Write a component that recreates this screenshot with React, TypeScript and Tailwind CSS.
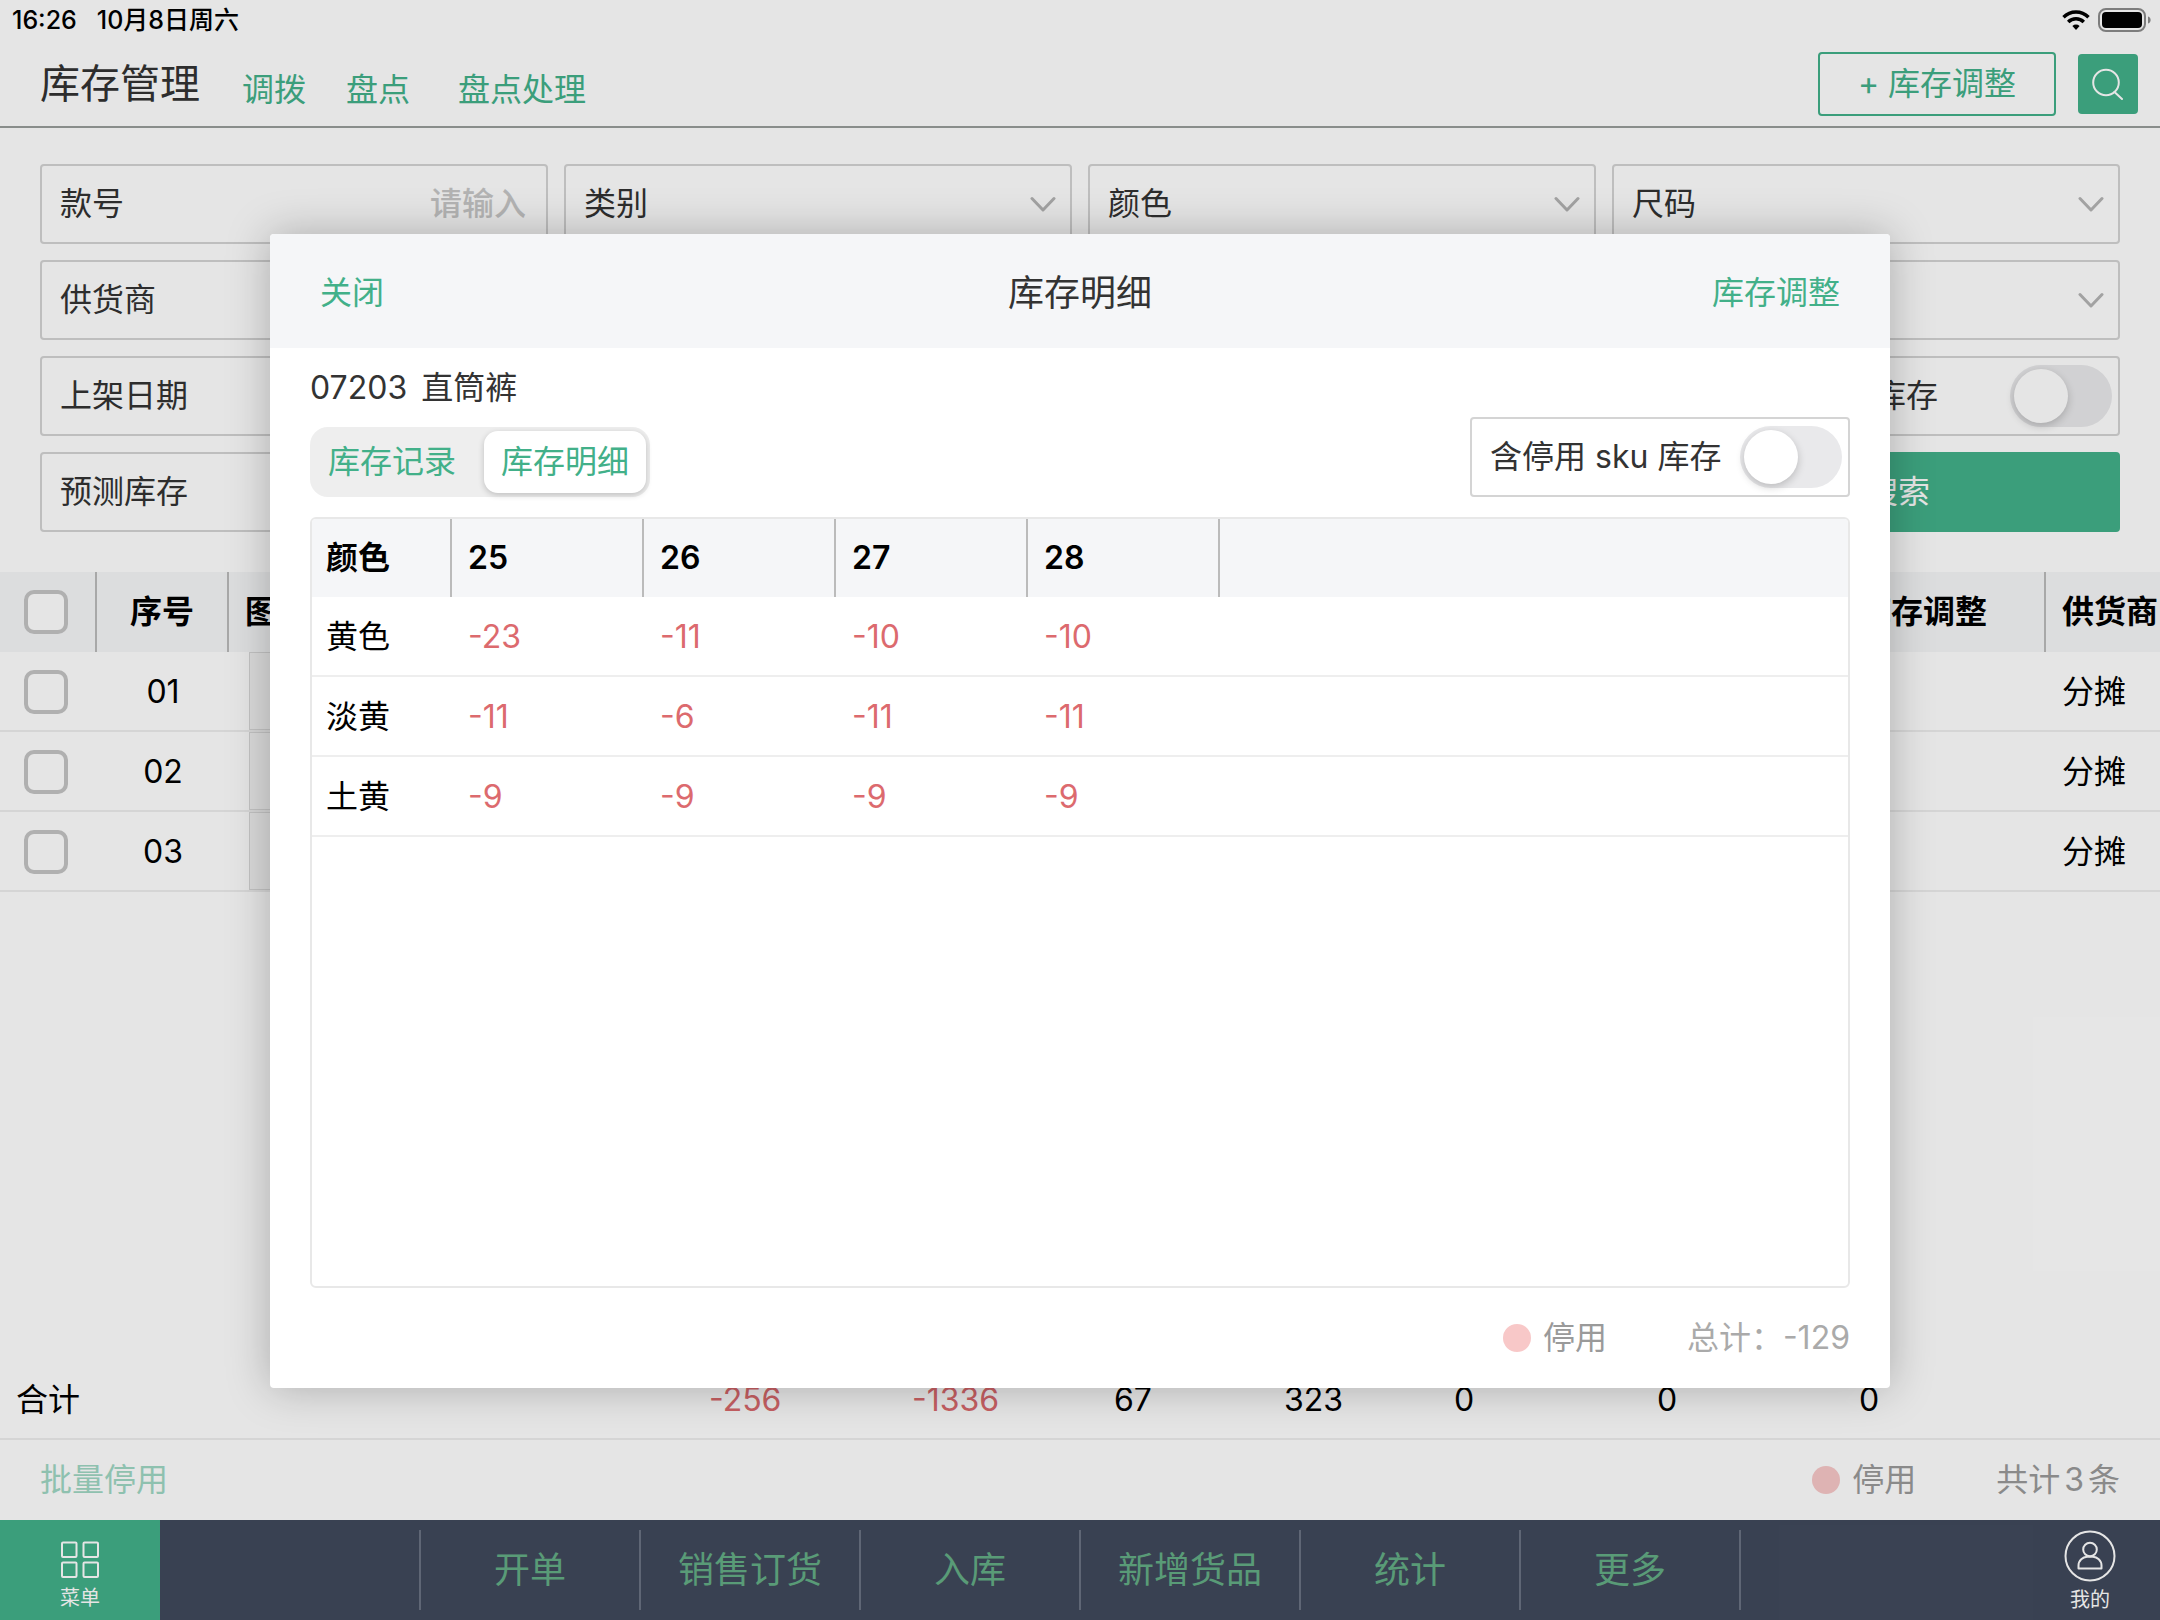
import React from 'react';
import { clsx } from 'clsx';

const sizes = ['25', '26', '27', '28'];

const stock = [
  { color: '黄色', values: [-23, -11, -10, -10] },
  { color: '淡黄', values: [-11, -6, -11, -11] },
  { color: '土黄', values: [-9, -9, -9, -9] },
];

const totals = [-256, -1336, 67, 323, 0, 0, 0];

const navItems = ['开单', '销售订货', '入库', '新增货品', '统计', '更多'];

const fieldBox = 'flex h-20 items-center rounded border-2 border-[#d4d4d4] bg-white pl-[18px] text-[#333333]';
const headCell = 'border-r-2 border-[#bbbbbb] px-4 text-left font-semibold whitespace-nowrap';
const bodyCell = 'border-b-2 border-[#eeeeee] pt-[2px]';

function StatusBar() {
  return (
    <div className="flex h-10 items-center justify-between pl-3 pr-2 text-[25px] font-medium text-black">
      <div className="flex gap-5">
        <span>16:26</span>
        <span>10月8日周六</span>
      </div>
      <div className="flex items-center gap-2">
        <svg className="h-5 w-7" viewBox="0 0 28 20" fill="none" stroke="currentColor" strokeWidth="3.4">
          <path d="M1.5 7.2a17.6 17.6 0 0 1 25 0" />
          <path d="M6.2 12a11 11 0 0 1 15.6 0" />
          <path d="M14 20l-3.6-4a5.2 5.2 0 0 1 7.2 0z" fill="currentColor" stroke="none" />
        </svg>
        <svg className="h-6 w-[54px]" viewBox="0 0 54 24" fill="none">
          <rect x="1" y="1" width="46" height="22" rx="7" stroke="#8c8c8c" strokeWidth="2" />
          <rect x="4" y="4" width="40" height="16" rx="4" fill="#000" />
          <path d="M50 8.5c2 .6 2.6 2 2.6 3.5s-.6 2.9-2.6 3.5z" fill="#8c8c8c" />
        </svg>
      </div>
    </div>
  );
}

function Header() {
  return (
    <header className="flex h-[88px] items-center justify-between border-b-2 border-[#999e9b] pl-10 pr-[22px] pt-[2px]">
      <div className="flex items-end">
        <h1 className="text-[40px] leading-[48px] text-[#333333]">库存管理</h1>
        <nav className="flex gap-10 pl-[42px] leading-9 text-[#42b089]">
          <a href="#transfer">调拨</a>
          <a href="#count" className="pr-2">盘点</a>
          <a href="#count-process">盘点处理</a>
        </nav>
      </div>
      <div className="flex items-center gap-[22px]">
        <button className="h-16 w-[238px] rounded border-2 border-[#42b089] text-[#42b089]">+ 库存调整</button>
        <button aria-label="搜索" className="flex size-[60px] items-center justify-center rounded bg-[#42b089] text-white">
          <svg className="size-8" viewBox="0 0 32 32" fill="none" stroke="currentColor" strokeWidth="2" strokeLinecap="round">
            <circle cx="14" cy="14.5" r="12.8" />
            <path d="M22.5 24l7.5 7" />
          </svg>
        </button>
      </div>
    </header>
  );
}

function Chevron() {
  return (
    <svg className="mr-[14px] h-4 w-[26px] shrink-0" viewBox="0 0 26 16" fill="none" stroke="#b5b5b5" strokeWidth="3" strokeLinecap="round" strokeLinejoin="round">
      <path d="M2 2.5l11 11.5L24 2.5" />
    </svg>
  );
}

function SelectField({ label, className }: { label?: string; className?: string }) {
  return (
    <label className={clsx(fieldBox, className)}>
      {label && <span className="shrink-0">{label}</span>}
      <select aria-label={label ?? '筛选'} className="h-full min-w-0 flex-1 appearance-none bg-transparent outline-none">
        <option value=""></option>
      </select>
      <Chevron />
    </label>
  );
}

function Switch() {
  return (
    <input
      type="checkbox"
      role="switch"
      className="h-[62px] w-[102px] shrink-0 appearance-none rounded-full bg-[#e9e9eb] p-1 before:block before:size-[54px] before:rounded-full before:bg-white before:shadow-[0_3px_8px_rgba(0,0,0,0.2)] before:content-[''] checked:bg-[#42b089] checked:before:ml-10"
    />
  );
}

function Filters() {
  return (
    <form className="grid grid-cols-4 gap-4 px-10 pb-10 pt-9">
      <label className={fieldBox}>
        <span className="shrink-0">款号</span>
        <input type="text" placeholder="请输入" className="min-w-0 flex-1 bg-transparent pr-5 text-right outline-none placeholder:font-medium placeholder:text-[#c8c8c8]" />
      </label>
      <SelectField label="类别" />
      <SelectField label="颜色" />
      <SelectField label="尺码" />
      <SelectField label="供货商" />
      <SelectField className="col-start-4" />
      <SelectField label="上架日期" />
      <label className={clsx(fieldBox, 'col-start-4 justify-between pr-[6px]')}>
        <span className="w-[306px] text-right">含停用 sku 库存</span>
        <Switch />
      </label>
      <SelectField label="预测库存" />
      <button type="button" className="col-start-4 h-20 rounded bg-[#42b089] pl-16 text-white">搜索</button>
    </form>
  );
}

function Columns() {
  return (
    <colgroup>
      <col className="w-[97px]" />
      <col className="w-[132px]" />
      <col className="w-[464px]" />
      <col className="w-[203px]" />
      <col className="w-[202px]" />
      <col className="w-[170px]" />
      <col className="w-[170px]" />
      <col className="w-[203px]" />
      <col className="w-[202px]" />
      <col className="w-[203px]" />
      <col className="w-[203px]" />
    </colgroup>
  );
}

function CheckBox({ label }: { label: string }) {
  return (
    <input
      type="checkbox"
      aria-label={label}
      className="block size-[44px] appearance-none rounded-[10px] border-4 border-[#c4c4c4] bg-white checked:bg-[#42b089]"
    />
  );
}

function StockList() {
  return (
    <div className="flex-1 overflow-hidden">
      <table className="w-[2249px] table-fixed border-separate border-spacing-0 text-black">
        <Columns />
        <thead>
          <tr className="h-20 bg-[#f5f6f8]">
            <th className="border-r-2 border-[#bbbbbb] pl-6"><CheckBox label="全选" /></th>
            <th className="border-r-2 border-[#bbbbbb] font-semibold">序号</th>
            <th className={headCell}>图片</th>
            <th className={headCell}></th>
            <th className={headCell}></th>
            <th className={headCell}></th>
            <th className={headCell}></th>
            <th className={headCell}></th>
            <th className={headCell}></th>
            <th className={headCell}>库存调整</th>
            <th className="px-4 text-left font-semibold whitespace-nowrap">供货商</th>
          </tr>
        </thead>
        <tbody>
          {['01', '02', '03'].map((no) => (
            <tr key={no} className="h-20">
              <td className={clsx(bodyCell, 'pl-6')}><CheckBox label={no} /></td>
              <td className={clsx(bodyCell, 'text-center')}>{no}</td>
              <td className="border-b-2 border-[#eeeeee] pl-5">
                <div className="h-[78px] w-20 border border-[#d9d9d9] bg-[#f3f3f3]" />
              </td>
              <td colSpan={7} className={bodyCell}></td>
              <td className={clsx(bodyCell, 'px-4')}>分摊</td>
            </tr>
          ))}
        </tbody>
      </table>
    </div>
  );
}

function Totals() {
  return (
    <div className="overflow-hidden">
      <table className="w-[2249px] table-fixed border-separate border-spacing-0 text-black">
        <Columns />
        <tbody>
          <tr className="h-20">
            <th colSpan={3} className={clsx(bodyCell, 'pl-4 text-left font-normal')}>合计</th>
            {totals.map((n, i) => (
              <td key={i} className={clsx(bodyCell, 'px-4', n < 0 && 'text-[#dc6a6e]')}>{n}</td>
            ))}
            <td className={bodyCell}></td>
          </tr>
        </tbody>
      </table>
    </div>
  );
}

function DisabledLegend() {
  return (
    <span className="flex items-center gap-3">
      <span className="size-7 rounded-full bg-[#f8c8c8]" />
      停用
    </span>
  );
}

function BottomNav() {
  return (
    <nav className="grid h-[100px] grid-cols-[1fr_auto_1fr] bg-[#40495c]">
      <button className="flex w-40 flex-col items-center justify-end gap-1 bg-[#42b089] pb-2 text-xl leading-7 text-white">
        <svg className="size-10" viewBox="0 0 40 40" fill="none" stroke="currentColor" strokeWidth="2">
          <rect x="2" y="2.500" width="14.5" height="14.5" rx="1" />
          <rect x="23.5" y="2.500" width="14.5" height="14.5" rx="1" />
          <rect x="2" y="22.5" width="14.5" height="14.5" rx="1" />
          <rect x="23.5" y="22.5" width="14.5" height="14.5" rx="1" />
        </svg>
        菜单
      </button>
      <div className="flex py-[10px] text-4xl text-[#64ad85]">
        {navItems.map((item, i) => (
          <button key={item} className={clsx('border-r-2 border-[#6a7283]', i === 0 ? 'w-[222px] border-l-2' : 'w-[220px]')}>
            {item}
          </button>
        ))}
      </div>
      <button className="flex w-35 flex-col items-center justify-end gap-1 justify-self-end pb-[6px] text-xl leading-7 text-white">
        <svg className="size-[52px]" viewBox="0 0 52 52" fill="none" stroke="currentColor" strokeWidth="2">
          <circle cx="26" cy="26" r="24.5" />
          <circle cx="26" cy="19.5" r="6.8" />
          <path d="M14.5 38.5v-3c0-5.5 4.5-8.5 8.5-8.8h6c4 .3 8.500 3.300 8.500 8.800v3z" strokeLinejoin="round" />
        </svg>
        我的
      </button>
    </nav>
  );
}

function StockDialog() {
  return (
    <section role="dialog" aria-label="库存明细" className="flex w-3/4 flex-col rounded bg-white shadow-[0_0_44px_rgba(0,0,0,0.25)]">
      <div className="grid h-[114px] shrink-0 grid-cols-3 items-center rounded-t bg-[#f5f6f8] px-[50px] pt-1 text-[#42b089]">
        <button className="justify-self-start">关闭</button>
        <h2 className="text-center text-4xl text-[#333333]">库存明细</h2>
        <button className="justify-self-end">库存调整</button>
      </div>
      <div className="flex min-h-0 flex-1 flex-col px-10 pb-5 pt-5">
        <p className="flex gap-[14px] leading-10 text-[#333333]">
          <span>07203</span>
          <span>直筒裤</span>
        </p>
        <div className="mt-[9px] flex items-end justify-between pb-5">
          <div role="tablist" className="flex h-[70px] rounded-[18px] bg-[#eeeeee] p-1 text-[#42b089]">
            <button role="tab" aria-selected="false" className="w-[170px] px-[14px] text-left">库存记录</button>
            <button role="tab" aria-selected="true" className="w-[162px] rounded-[14px] bg-white px-[14px] shadow-[0_2px_6px_rgba(0,0,0,0.2)]">库存明细</button>
          </div>
          <label className={clsx(fieldBox, 'w-[380px] justify-between pr-[6px]')}>
            <span className="whitespace-nowrap">含停用 sku 库存</span>
            <Switch />
          </label>
        </div>
        <div className="flex-1 overflow-hidden rounded-md border-2 border-[#e8e8e8]">
          <table className="w-full table-fixed border-separate border-spacing-0 text-black">
            <colgroup>
              <col className="w-[140px]" />
              <col className="w-[192px]" />
              <col className="w-[192px]" />
              <col className="w-[192px]" />
              <col className="w-[192px]" />
              <col />
            </colgroup>
            <thead>
              <tr className="h-[78px] bg-[#f5f6f8]">
                <th className="border-r-2 border-[#bbbbbb] pl-[14px] text-left font-semibold">颜色</th>
                {sizes.map((size) => (
                  <th key={size} className={headCell}>{size}</th>
                ))}
                <th></th>
              </tr>
            </thead>
            <tbody>
              {stock.map((row) => (
                <tr key={row.color} className="h-20">
                  <th className={clsx(bodyCell, 'pl-[14px] text-left font-normal')}>{row.color}</th>
                  {row.values.map((value, i) => (
                    <td key={i} className={clsx(bodyCell, 'px-4 text-[#dc6a6e]')}>{value}</td>
                  ))}
                  <td className={bodyCell}></td>
                </tr>
              ))}
            </tbody>
          </table>
        </div>
        <div className="flex h-20 items-end justify-end gap-20 pb-[10px] text-[#9a9a9a]">
          <DisabledLegend />
          <span className="text-[#aaaaaa]">总计：-129</span>
        </div>
      </div>
    </section>
  );
}

export default function App() {
  return (
    <div className="relative flex min-h-screen flex-col overflow-hidden bg-white font-['Inter','Noto_Sans_CJK_SC',sans-serif] text-[32px] leading-10">
      <StatusBar />
      <Header />
      <Filters />
      <StockList />
      <Totals />
      <div className="flex h-20 items-center justify-between px-10 text-[#9a9a9a]">
        <button className="text-[#42b089] opacity-50" disabled>批量停用</button>
        <div className="flex gap-20">
          <DisabledLegend />
          <span>共计<span className="mx-1">3</span>条</span>
        </div>
      </div>
      <BottomNav />
      <div className="absolute inset-0 flex justify-center bg-black/10 pb-[232px] pt-[234px]">
        <StockDialog />
      </div>
    </div>
  );
}
